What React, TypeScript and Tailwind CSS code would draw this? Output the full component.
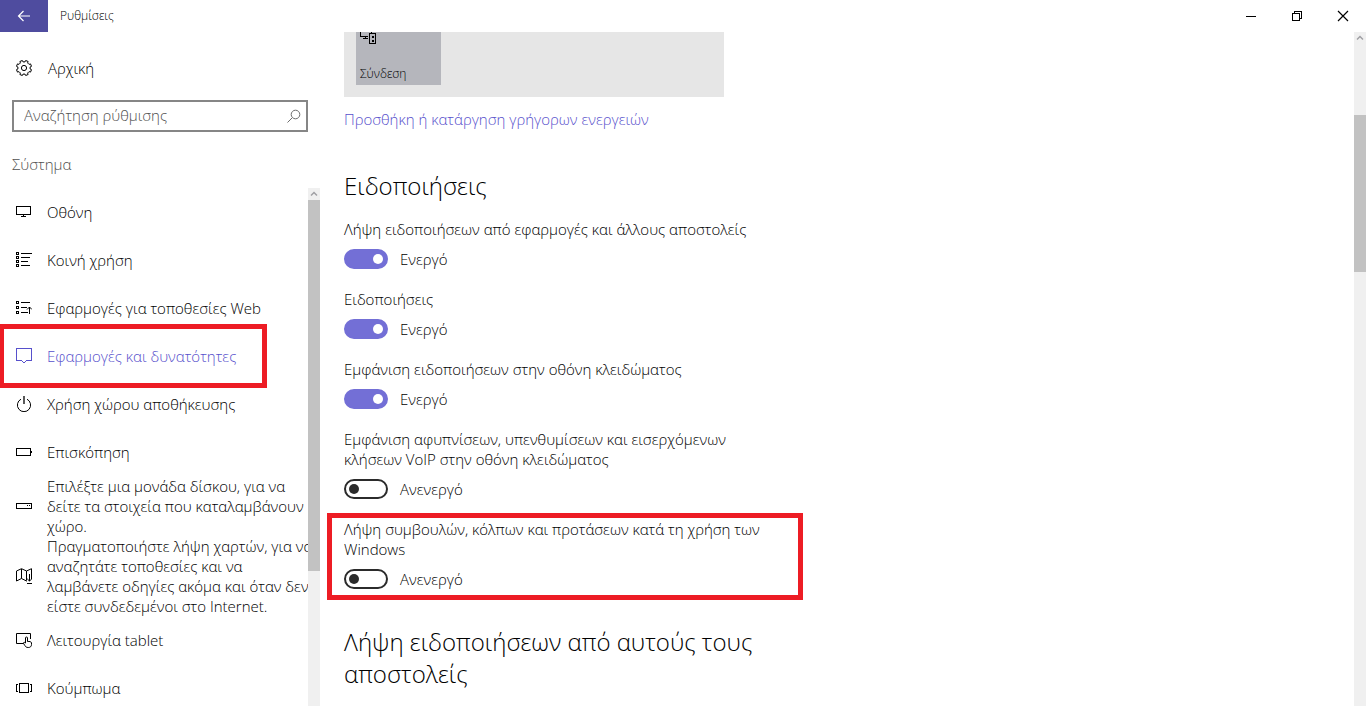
import { useState, type ReactNode } from 'react'

interface NavItem {
  lines: string[]
  icon: ReactNode
  active?: boolean
}

interface Setting {
  id: string
  label: string
  enabled: boolean
  highlighted?: boolean
}

function Icon({ children, crisp = true }: { children: ReactNode; crisp?: boolean }) {
  return (
    <svg
      className="size-4 shrink-0"
      viewBox="0 0 16 16"
      fill="none"
      stroke="currentColor"
      shapeRendering={crisp ? 'crispEdges' : 'auto'}
      aria-hidden="true"
    >
      {children}
    </svg>
  )
}

// Eight flat teeth around a ring, four points per tooth
const gearPoints = Array.from({ length: 32 }, (_, i) => {
  const tooth = Math.floor(i / 4)
  const offsets = [-13, -10, 10, 13]
  const radii = [6.2, 7.7, 7.7, 6.2]
  const angle = ((tooth * 45 + 22.5 + offsets[i % 4]) * Math.PI) / 180
  const r = radii[i % 4]
  return `${(8 + r * Math.cos(angle)).toFixed(2)},${(8 + r * Math.sin(angle)).toFixed(2)}`
}).join(' ')

const navItems: NavItem[] = [
  {
    lines: ['Οθόνη'],
    icon: (
      <Icon>
        <path d="M.5 2.5h14v8H.5zM7.5 11v1M5 12.5h5" />
      </Icon>
    ),
  },
  {
    lines: ['Κοινή χρήση'],
    icon: (
      <Icon>
        <path d="M.5 .5h2v2h-2zM.5 4.5h2v2h-2zM.5 8.5h2v2h-2zM.5 12.5h2v2h-2z" />
        <path d="M5 1.5h11M5 5.5h9M5 9.5h7M5 13.5h9" />
      </Icon>
    ),
  },
  {
    lines: ['Εφαρμογές για τοποθεσίες Web'],
    icon: (
      <Icon>
        <path d="M.5 1.5h2v2h-2zM.5 6.5h2v2h-2zM.5 11.5h2v2h-2z" />
        <path d="M5 2.5h9M5 7.5h6M5 12.5h7M13.5 7v7" />
        <path d="M11 9.5l2.5-2.5L16 9.5" shapeRendering="auto" />
      </Icon>
    ),
  },
  {
    lines: ['Εφαρμογές και δυνατότητες'],
    active: true,
    icon: (
      <Icon>
        <path d="M.5 .5h15v12h-5l-2.5 2.5l-2.5-2.5h-5z" />
      </Icon>
    ),
  },
  {
    lines: ['Χρήση χώρου αποθήκευσης'],
    icon: (
      <Icon crisp={false}>
        <path d="M5 3.2a6.6 6.6 0 1 0 6 0" />
        <path d="M8 0v8" strokeWidth="1.3" />
      </Icon>
    ),
  },
  {
    lines: ['Επισκόπηση'],
    icon: (
      <Icon>
        <path d="M.5 4.5h14v7H.5zM15.5 7v2" />
      </Icon>
    ),
  },
  {
    lines: ['Επιλέξτε μια μονάδα δίσκου, για να', 'δείτε τα στοιχεία που καταλαμβάνουν', 'χώρο.'],
    icon: (
      <Icon>
        <path d="M.5 5.5h15v5H.5zM11 7.5h1M13 7.5h1" />
      </Icon>
    ),
  },
  {
    lines: [
      'Πραγματοποιήστε λήψη χαρτών, για να',
      'αναζητάτε τοποθεσίες και να',
      'λαμβάνετε οδηγίες ακόμα και όταν δεν',
      'είστε συνδεδεμένοι στο Internet.',
    ],
    icon: (
      <Icon crisp={false}>
        <path d="M11 12.8l-.5.2-5-2.5-5 2.5V3l5-2.3 5 2.3 5-2.3V11M5.5 1v9.5M10.5 3v9.5" />
        <path d="M13.5 6v7M11.2 10.8l2.3 2.3 2.3-2.3M11 15.5h5" />
      </Icon>
    ),
  },
  {
    lines: ['Λειτουργία tablet'],
    icon: (
      <Icon crisp={false}>
        <path d="M7 11.5H.5v-10h14V7" />
        <path d="M9.5 11V6a1 1 0 0 1 2 0v3.5c2-.3 4 .2 4 1.5v1.5c0 2-1.3 3-3.2 3-1.8 0-2.8-.7-3.5-2l-1.5-2.5c.5-1 1.5-.7 2.2 0z" />
      </Icon>
    ),
  },
  {
    lines: ['Κούμπωμα'],
    icon: (
      <Icon>
        <path d="M3.5 3.5h9v9h-9zM2 4.5H.5v7H2M14 4.5h1.5v7H14" />
      </Icon>
    ),
  },
]

const settings: Setting[] = [
  { id: 'apps', label: 'Λήψη ειδοποιήσεων από εφαρμογές και άλλους αποστολείς', enabled: true },
  { id: 'notifications', label: 'Ειδοποιήσεις', enabled: true },
  { id: 'lock', label: 'Εμφάνιση ειδοποιήσεων στην οθόνη κλειδώματος', enabled: true },
  {
    id: 'voip',
    label: 'Εμφάνιση αφυπνίσεων, υπενθυμίσεων και εισερχόμενων κλήσεων VoIP στην οθόνη κλειδώματος',
    enabled: false,
  },
  {
    id: 'tips',
    label: 'Λήψη συμβουλών, κόλπων και προτάσεων κατά τη χρήση των Windows',
    enabled: false,
    highlighted: true,
  },
]

function TitleBar() {
  return (
    <header className="flex h-8 shrink-0 items-center">
      <button type="button" aria-label="Πίσω" className="flex h-8 w-12 items-center justify-center bg-[#4f4c9f] text-white">
        <Icon crisp={false}>
          <path d="M14 8H2.5M7.5 3L2.5 8l5 5" strokeWidth="1.2" />
        </Icon>
      </button>
      <h1 className="flex-1 pl-3 text-xs">Ρυθμίσεις</h1>
      <button type="button" aria-label="Ελαχιστοποίηση" className="flex h-8 w-[46px] items-center justify-center">
        <Icon>
          <path d="M3 8.5h10" />
        </Icon>
      </button>
      <button type="button" aria-label="Επαναφορά" className="flex h-8 w-[46px] items-center justify-center">
        <Icon>
          <path d="M3.5 5.5h7v7h-7zM5.5 5V3.5h7v7H11" />
        </Icon>
      </button>
      <button type="button" aria-label="Κλείσιμο" className="flex h-8 w-[46px] items-center justify-center">
        <Icon crisp={false}>
          <path d="M3 3l10 10M13 3L3 13" strokeWidth="1.2" />
        </Icon>
      </button>
    </header>
  )
}

function ScrollBar({ thumb }: { thumb: string }) {
  return (
    <div className="w-3 shrink-0 bg-[#f0f0f0]">
      <svg className="h-3 w-3" viewBox="0 0 12 12" fill="none" stroke="#a0a0a4" strokeWidth="1.5" aria-hidden="true">
        <path d="M3 7.5l3-3 3 3" />
      </svg>
      <div className={`bg-[#c2c2c2] ${thumb}`} />
    </div>
  )
}

function SideBar() {
  return (
    <aside className="flex w-80 shrink-0 flex-col">
      <a href="#home" className="mt-3 flex h-12 items-center gap-4 pl-4">
        <Icon crisp={false}>
          <polygon points={gearPoints} />
          <circle cx="8" cy="8" r="2.6" />
        </Icon>
        Αρχική
      </a>
      <div className="mx-3 mt-2 flex h-8 items-center border-2 border-[#868686] pr-1 text-[#6d6d6d]">
        <input
          type="search"
          aria-label="Αναζήτηση ρύθμισης"
          placeholder="Αναζήτηση ρύθμισης"
          className="min-w-0 flex-1 bg-transparent pb-[2px] pl-[10px] outline-none placeholder:text-[#505050]"
        />
        <Icon crisp={false}>
          <circle cx="9.5" cy="6.5" r="4.3" />
          <path d="M6.3 9.7L1.5 14.5" />
        </Icon>
      </div>
      <h2 className="mt-[22px] mb-[14px] pl-3 font-light text-[#505050]">Σύστημα</h2>
      <div className="flex min-h-0 flex-1">
        <nav className="min-w-0 flex-1 overflow-hidden">
          {navItems.map((item) => (
            <a
              key={item.lines[0]}
              href="#"
              className={`relative flex items-center gap-[15px] pl-4 whitespace-nowrap ${
                item.lines.length === 1 ? 'h-12' : ''
              } ${item.active ? 'text-[#5750cc]' : ''}`}
            >
              {item.icon}
              <span>
                {item.lines.map((line) => (
                  <span key={line} className="block">
                    {line}
                  </span>
                ))}
              </span>
              {item.active && (
                <span className="pointer-events-none absolute -inset-y-2 left-0 w-[267px] border-5 border-l-4 border-[#ed1c24]" />
              )}
            </a>
          ))}
        </nav>
        <ScrollBar thumb="h-[371px]" />
      </div>
    </aside>
  )
}

function ToggleSetting({ setting }: { setting: Setting }) {
  const [on, setOn] = useState(setting.enabled)
  return (
    <div className="relative">
      <label htmlFor={setting.id} className="block">
        {setting.label}
      </label>
      <div className="mt-[10px] flex items-center gap-3">
        <input
          id={setting.id}
          type="checkbox"
          role="switch"
          checked={on}
          onChange={(e) => setOn(e.target.checked)}
          className="flex h-5 w-11 shrink-0 appearance-none items-center rounded-full border-2 border-[#2b2b2b] px-[3px] before:size-[10px] before:rounded-full before:bg-[#2b2b2b] checked:justify-end checked:border-[#736fd6] checked:bg-[#736fd6] checked:before:bg-white"
        />
        <span>{on ? 'Ενεργό' : 'Ανενεργό'}</span>
      </div>
      {setting.highlighted && (
        <div className="pointer-events-none absolute -top-[6px] -right-[29px] -bottom-[11px] -left-[17px] border-5 border-[#ed1c24]" />
      )}
    </div>
  )
}

function Content() {
  return (
    <main className="min-w-0 flex-1 overflow-hidden pl-6">
      {/* Quick actions, scrolled mostly out of view */}
      <div className="w-[380px] bg-[#e6e6e6] px-3 pb-3">
        <button type="button" className="flex h-[53px] w-[85px] flex-col items-start justify-between bg-[#b5b6bc] px-1 pb-[3px] text-xs">
          <svg className="h-3 w-4" viewBox="0 0 16 12" fill="none" stroke="currentColor" shapeRendering="crispEdges" aria-hidden="true">
            <path d="M.5 0v4.5H8M5.5 5v1M3 6.5h5M9.5 1.5h6v10h-6zM11.5 0v1" />
            <path d="M12 5h2M12 9h2" strokeWidth="2" />
          </svg>
          Σύνδεση
        </button>
      </div>
      <a href="#quick-actions" className="mt-3 inline-block text-[#5750cc]">
        Προσθήκη ή κατάργηση γρήγορων ενεργειών
      </a>
      <div className="max-w-[430px]">
        <h2 className="mt-[41px] text-2xl leading-8 font-light">Ειδοποιήσεις</h2>
        <div className="mt-[17px] flex flex-col gap-5">
          {settings.map((setting) => (
            <ToggleSetting key={setting.id} setting={setting} />
          ))}
        </div>
        <h2 className="mt-[37px] text-2xl leading-8 font-light">Λήψη ειδοποιήσεων από αυτούς τους αποστολείς</h2>
      </div>
    </main>
  )
}

export default function App() {
  return (
    <div className="flex h-screen flex-col overflow-hidden bg-white font-['Open_Sans','Noto_Sans',sans-serif] text-[15px] leading-5 font-light text-black">
      <TitleBar />
      <div className="flex min-h-0 flex-1">
        <SideBar />
        <Content />
        <ScrollBar thumb="mt-[71px] h-[157px]" />
      </div>
    </div>
  )
}
